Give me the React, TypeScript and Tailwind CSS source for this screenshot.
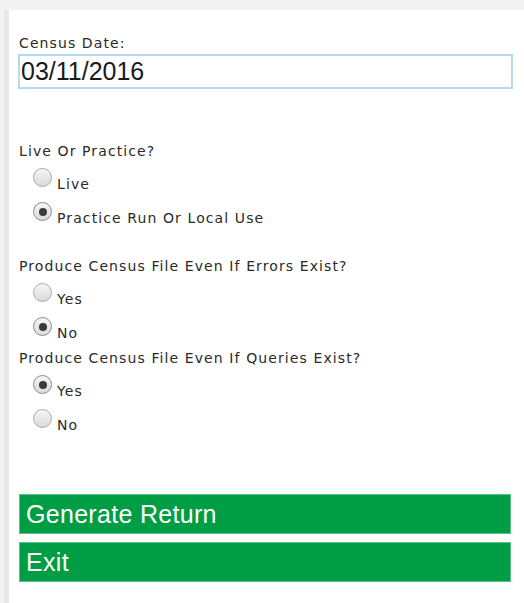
import React from 'react'

const label = "text-[14px] leading-[21px] text-[#2a2a2a] font-['DejaVu_Sans',sans-serif] tracking-[1.1px]"

function Radio({ text, checked }: { text: string; checked?: boolean }) {
  return (
    <div className="flex items-start h-[34px] pl-[14px]">
      <span
        className={`w-[19px] h-[19px] rounded-full border bg-gradient-to-b from-[#f6f6f6] to-[#dadada] flex items-center justify-center shrink-0 ${
          checked ? 'border-[#8c8c8c]' : 'border-[#ababab]'
        }`}
      >
        {checked && <span className="w-[8px] h-[8px] rounded-full bg-[#3a3a3a]" />}
      </span>
      <span className={`${label} ml-[5px] mt-[6px]`}>{text}</span>
    </div>
  )
}

function Question({ title, options, className = '' }: { title: string; options: { text: string; checked?: boolean }[]; className?: string }) {
  return (
    <div className={className}>
      <div className={`${label} h-[27px]`}>{title}</div>
      {options.map(o => (
        <Radio key={o.text} text={o.text} checked={o.checked} />
      ))}
    </div>
  )
}

export default function App() {
  return (
    <div className="w-[524px] h-[603px] bg-[#f3f3f3] pt-[10px] pl-[4px] overflow-hidden">
      <div className="h-full bg-white border-l-[5px] border-[#e8e8e8] pl-[10px] pr-[11px] pt-[23px]">
        <div className={label}>Census Date:</div>
        <div className="-ml-px h-[35px] border-2 border-[#b5dbe8] flex items-center pl-[1px]">
          <span className="text-[25px] text-[#1a1a1a] font-['Liberation_Sans',Arial,sans-serif] leading-none">03/11/2016</span>
        </div>

        <Question
          className="mt-[52px]"
          title="Live Or Practice?"
          options={[{ text: 'Live' }, { text: 'Practice Run Or Local Use', checked: true }]}
        />
        <Question
          className="mt-[20px]"
          title="Produce Census File Even If Errors Exist?"
          options={[{ text: 'Yes' }, { text: 'No', checked: true }]}
        />
        <Question
          className="-mt-[3px]"
          title="Produce Census File Even If Queries Exist?"
          options={[{ text: 'Yes', checked: true }, { text: 'No' }]}
        />

        <div className="mt-[51px] mr-[2px] flex flex-col gap-[8px]">
          {['Generate Return', 'Exit'].map(t => (
            <button
              key={t}
              className="h-[40px] bg-[#009e44] border border-[#5cc08a] text-left pl-[6px] text-white text-[25px] tracking-[0.3px] font-['Liberation_Sans',Arial,sans-serif] leading-none"
            >
              {t}
            </button>
          ))}
        </div>
      </div>
    </div>
  )
}
